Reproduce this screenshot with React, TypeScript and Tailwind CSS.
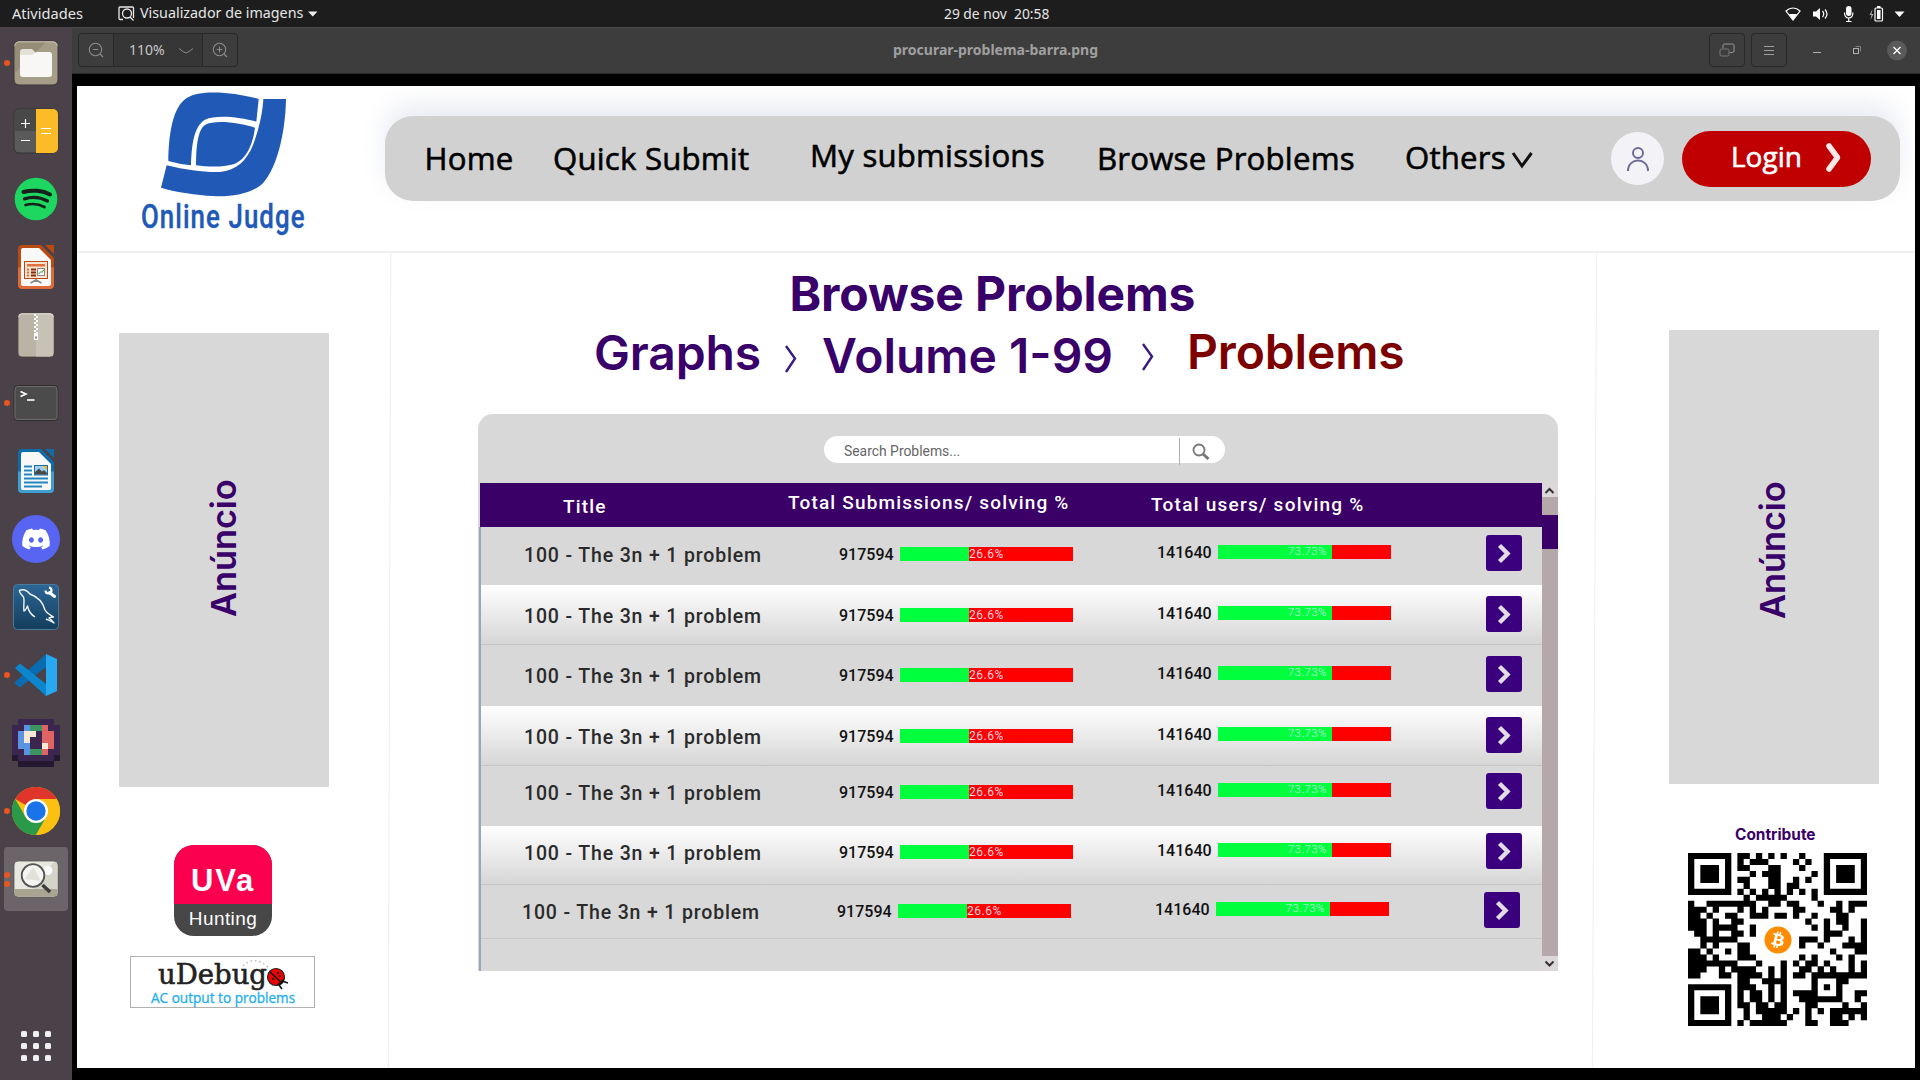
import React from "react";
import { FaDiscord, FaBitcoin } from "react-icons/fa";

const INTER = "font-['Inter',sans-serif]";
const OPEN = "font-['Open_Sans','Noto_Sans',sans-serif]";
const UI = "font-['Noto_Sans','Open_Sans',sans-serif]";
const ROBOTO = "font-['Roboto',sans-serif]";

function Txt({ c, children }: { c: string; children: string }) {
  return <div className={"whitespace-pre leading-none " + c}>{children}</div>;
}

const QR = [
  "#######.##.#.#.#..#...#######",
  "#.....#.#.###....#.#..#.....#",
  "#.###.#.##...##...#...#.###.#",
  "#.###.#...#.###.....#.#.###.#",
  "#.###.#.##...##..#.#..#.###.#",
  "#.....#..#...##.##....#.....#",
  "#######.#.#.#.#.#.#.#.#######",
  ".........#.#####....#........",
  "#..########..##.##...#..#.###",
  "###.#...#.#.#....##....##.#..",
  "##.#..##..###.##.#..#...##...",
  "###.#..##..........#..#.##..#",
  "###.####..#.........#.#..#..#",
  ".##.#..##.#...........###...#",
  "..######..........###.#...#.#",
  "..#.#...##........#..#...####",
  "##.#..#.##.............#...##",
  "###.#...###.......#.#...#.#..",
  "########...#...#.#.##.#...#.#",
  "###..#.####..#.#..##.#.#..#.#",
  "##...##.####.#.#.##.#########",
  "........##..####....#...##...",
  "#######.###..#.#....#.#.#....",
  "#.....#.#.##.#.#.####...#..##",
  "#.###.#.#.##.#.#..#######..#.",
  "#.###.#.##.##.##...##....#..#",
  "#.###.#..#.#####.#.#.#.######",
  "#.....#..#..###.#..#...##.#.#",
  "#######.#.######...##..###...",
];

const ROWS = [
  { box: "h-[58px] pt-[8px] bg-[#d8d8d8]", shift: "" },
  { box: "h-[60px] pt-[10.5px] border-b border-[#c6c6c6] bg-linear-to-b from-white to-[#d6d6d6]", shift: "" },
  { box: "h-[61px] pt-[11px] bg-[#d8d8d8]", shift: "" },
  { box: "h-[60px] pt-[10.5px] border-b border-[#c6c6c6] bg-linear-to-b from-white to-[#d6d6d6]", shift: "" },
  { box: "h-[60px] pt-[6.5px] bg-[#d8d8d8]", shift: "" },
  { box: "h-[59px] pt-[6.5px] border-b border-[#c6c6c6] bg-linear-to-b from-white to-[#d6d6d6]", shift: "" },
  { box: "h-[54px] pt-[6.5px] border-b border-[#c8c8c8] bg-[#d8d8d8]", shift: "-ml-[2px]" },
];

function Row({ box, shift }: { box: string; shift: string }) {
  return (
    <div className={box}>
      <div className={"flex items-start " + shift}>
        <Txt c={ROBOTO + " ml-[43px] mt-[11px] w-[315px] text-[19.5px] font-medium tracking-[0.85px] text-[#2a2a2a]"}>100 - The 3n + 1 problem</Txt>
        <Txt c={ROBOTO + " mt-[12px] w-[61px] text-[16px] font-medium text-[#111]"}>917594</Txt>
        <div className="mt-[12px] flex h-[14px] w-[173px] bg-[#ff0000]">
          <div className="w-[69px] bg-[#00ff3c]" />
          <Txt c={ROBOTO + " pt-px text-[12px] tracking-[0.5px] text-[#ffd0e0]"}>26.6%</Txt>
        </div>
        <Txt c={ROBOTO + " ml-[84px] mt-[10px] w-[61px] text-[16px] font-medium text-[#111]"}>141640</Txt>
        <div className="mt-[10px] flex h-[14px] w-[173px] bg-[#ff0000]">
          <div className="flex w-[114px] justify-end bg-[#00ff3c] pr-[5px]">
            <Txt c={ROBOTO + " pt-px text-[11.5px] font-light tracking-[0.4px] text-[#c8ffe8]"}>73.73%</Txt>
          </div>
        </div>
        <div className="ml-[95px] flex h-[36px] w-[36px] items-center justify-center rounded-[3px] bg-[#3a007e]">
          <svg width="36" height="36" fill="none" stroke="#e2dce6" strokeWidth="4.4">
            <path d="M13.5 10.5 L21.5 18.5 L13.5 26.5" />
          </svg>
        </div>
      </div>
    </div>
  );
}

function OfficeShape({ a, b, id }: { a: string; b: string; id: string }) {
  return (
    <>
      <defs>
        <linearGradient id={id} x1="0" y1="0" x2="0" y2="1">
          <stop offset="0.5" stopColor={a} />
          <stop offset="0.52" stopColor={b} />
        </linearGradient>
      </defs>
      <path d="M10 2 H29 L42 15 V42 a4 4 0 0 1 -4 4 H10 a4 4 0 0 1 -4 -4 V6 a4 4 0 0 1 4 -4Z" fill={"url(#" + id + ")"} />
      <path d="M11 5 H27 L39 17 V41 a2 2 0 0 1 -2 2 H11 a2 2 0 0 1 -2 -2 V7 a2 2 0 0 1 2 -2Z" fill="#f8f8f8" />
      <path d="M33 2 H42 V11Z" fill={a} />
    </>
  );
}

const PIX: Record<string, string> = { P: "#3b2650", B: "#5a94e0", G: "#3a9560", R: "#e06464", W: "#f8e8d8", D: "#241830" };
const PIXROWS = [".PPPPPP.", "PPBGGRPP", "PBWWPRRP", "PBWPPRRP", "PBBPPWRP", "PPBGGRPP", "DPPPPPPD", ".DDDDDD."];

const ICONS: { dots: number; active?: boolean; art: React.ReactNode }[] = [
  {
    dots: 1,
    art: (
      <>
        <rect x="2" y="2" width="44" height="44" rx="5" fill="#a59d88" stroke="#3b3436" />
        <path d="M3 34 L34 3 H7 a4 4 0 0 0 -4 4Z" fill="#968d77" />
        <path d="M2.8 7 a4.2 4.2 0 0 1 4.2-4.2 H41 a4.2 4.2 0 0 1 4.2 4.2" fill="none" stroke="#cdc7b8" />
        <path d="M8 13 a3 3 0 0 1 3-3 H20 l3 3 V18 H8Z" fill="#e4e0d6" />
        <path d="M8 16 H20 l4-3 H37 a3 3 0 0 1 3 3 V35 a3 3 0 0 1 -3 3 H11 a3 3 0 0 1 -3 -3Z" fill="#f8f7f6" />
      </>
    ),
  },
  {
    dots: 0,
    art: (
      <>
        <rect x="2" y="2" width="44" height="44" rx="5" fill="#5a5a5a" stroke="#333" />
        <path d="M2.5 24 V7 a4.5 4.5 0 0 1 4.5-4.5 H24 V24Z" fill="#484848" />
        <path d="M24 2 H41 a5 5 0 0 1 5 5 V41 a5 5 0 0 1 -5 5 H24Z" fill="#fcbc28" />
        <path d="M9 16.5 h9 M13.5 12 v9 M9 33.5 h9 M29 21.5 h10 M29 26.5 h10" stroke="#fff" strokeWidth="1.2" />
      </>
    ),
  },
  {
    dots: 0,
    art: (
      <>
        <circle cx="24" cy="24" r="21.3" fill="#1ed760" />
        <g fill="none" stroke="#14201a" strokeLinecap="round">
          <path d="M11.5 17 C20 14.5 31 15.5 38 19.5" strokeWidth="4" />
          <path d="M12.5 23.8 C20 21.5 29 22.5 35.5 26" strokeWidth="3.3" />
          <path d="M13.5 30 C20 28.3 27 29 32.5 32" strokeWidth="2.7" />
        </g>
      </>
    ),
  },
  {
    dots: 0,
    art: (
      <>
        <OfficeShape id="imp" a="#b84a12" b="#dd6a38" />
        <rect x="12.5" y="18.5" width="23" height="17" fill="#f9e3d2" stroke="#b84a12" />
        <rect x="15" y="21" width="18" height="2.5" fill="#e07040" />
        <path d="M15 26.5 h2 M15 29.5 h2 M15 32.5 h2" stroke="#e07040" strokeWidth="2" />
        <path d="M19 26.5 h5 M19 29.5 h5 M19 32.5 h5" stroke="#8a2e08" strokeWidth="2" />
        <rect x="25.5" y="25.5" width="7" height="7" fill="#fff" stroke="#888" />
        <path d="M26.5 31 L29 28.5 L30 29.5 L32 26.5" fill="none" stroke="#2a9a2a" />
        <path d="M24 36 v3 M24 37 L18.5 40 M24 37 L29.5 40" stroke="#888" strokeWidth="1.5" />
      </>
    ),
  },
  {
    dots: 0,
    art: (
      <>
        <rect x="6" y="2" width="36" height="44" rx="4" fill="#b9b4a5" stroke="#4a4440" strokeWidth="0.8" />
        <path d="M24 2.5 H38 a3.5 3.5 0 0 1 3.5 3.5 V42 a3.5 3.5 0 0 1 -3.5 3.5 H24Z" fill="#c6c2b6" />
        <path d="M6.8 6 a3.2 3.2 0 0 1 3.2-3.2 H38 a3.2 3.2 0 0 1 3.2 3.2" fill="none" stroke="#e4e1d8" />
        <path d="M23 3 V22" stroke="#fff" strokeWidth="2" strokeDasharray="2 2" />
        <path d="M25 5 V22" stroke="#fff" strokeWidth="2" strokeDasharray="2 2" />
        <path d="M22 22 h4 v7 h-4Z" fill="#fff" />
        <rect x="23" y="25.5" width="2" height="2" fill="#888" />
      </>
    ),
  },
  {
    dots: 1,
    art: (
      <>
        <rect x="2" y="6.5" width="44" height="35" rx="4" fill="#4b4b4b" stroke="#2c2c2c" />
        <rect x="3" y="7.5" width="42" height="33" rx="3" fill="none" stroke="#6c6c6c" />
        <path d="M8.5 12.5 L14 15 L8.5 17.5" fill="none" stroke="#fff" strokeWidth="1.6" />
        <path d="M15 21 h7.5" stroke="#fff" strokeWidth="1.6" />
      </>
    ),
  },
  {
    dots: 0,
    art: (
      <>
        <OfficeShape id="wri" a="#0f6ca8" b="#3f9fd2" />
        <path d="M12 19.5 h8 M12 23.5 h8 M12 27.5 h8 M12 31.5 h24 M12 35.5 h24 M12 39.5 h18" stroke="#2288c0" strokeWidth="1.8" />
        <rect x="22.5" y="18.5" width="13" height="9.5" fill="#9fd0f0" stroke="#1b6ea5" />
        <path d="M23 27.5 V25 L27 21.5 L30 24.5 L32 23 L35 26 V27.5Z" fill="#4a4a4a" />
        <path d="M31 19 h4 v4Z" fill="#fcb414" />
      </>
    ),
  },
  {
    dots: 0,
    art: (
      <>
        <circle cx="24" cy="24" r="24" fill="#5865f2" />
        <FaDiscord x={9} y={9} size={30} color="#fff" />
      </>
    ),
  },
  {
    dots: 0,
    art: (
      <>
        <defs>
          <linearGradient id="sea" x1="0" y1="0" x2="0" y2="1">
            <stop offset="0" stopColor="#2c6696" />
            <stop offset="1" stopColor="#143d5c" />
          </linearGradient>
        </defs>
        <rect x="1.5" y="1.5" width="45" height="45" rx="4" fill="url(#sea)" stroke="#4a7a9c" />
        <path d="M23 34 C18 31 16.500 28 15.500 23 C14 26 13.500 28 12 28 C11 23 13 18 11.500 14 C9 11 7 9.500 7.500 7.500 C11 6 15 7.500 18 11 C26 14 31 19 33 27 C35 31 38 31.500 41.500 34 C39 34 38 34.500 37 35 C39 36.500 40 37.500 42 40 C39 38 36 37 34 36" fill="none" stroke="#eef4f8" strokeWidth="1.400" strokeLinejoin="round" />
        <path d="M37.500 9.500 L42.500 13.500" stroke="#fff" strokeWidth="3" strokeLinecap="round" />
        <path d="M33.500 7.500 a3 3 0 1 0 3.500 -3" fill="none" stroke="#fff" strokeWidth="2.200" />
      </>
    ),
  },
  {
    dots: 1,
    art: (
      <>
        <path d="M3 31 L34 3 L34 16 L8 36.5 L3 32.5Z" fill="#0a6cb0" />
        <path d="M3 17 L8 12.5 L34 33 V45Z" fill="#0d86d0" />
        <path d="M34 3 L45 8 V40 L34 45Z" fill="#28a8f0" />
      </>
    ),
  },
  {
    dots: 0,
    art: (
      <g shapeRendering="crispEdges">
        {PIXROWS.flatMap((r, y) =>
          r.split("").map((c, x) => (c === "." ? null : <rect key={x + "-" + y} x={x * 6} y={y * 6} width="6" height="6" fill={PIX[c]} />))
        )}
      </g>
    ),
  },
  {
    dots: 1,
    art: (
      <>
        <circle cx="24" cy="24" r="24" fill="#fcc010" />
        <path d="M24 24 L3.2 12 A24 24 0 0 1 44.8 12Z" fill="#e0352b" />
        <path d="M3.2 12 A24 24 0 0 0 24 48 L34.4 30 L24 24 L13.6 30Z" fill="#2a9a48" />
        <path d="M24 12 H44.8 A24 24 0 0 1 24 48 L34.4 30Z" fill="#fcc010" />
        <circle cx="24" cy="24" r="12" fill="#fff" />
        <circle cx="24" cy="24" r="9.7" fill="#1a73e8" />
      </>
    ),
  },
  {
    dots: 2,
    active: true,
    art: (
      <>
        <rect x="2" y="6" width="44" height="36" rx="4" fill="#e9e8e0" stroke="#555" strokeWidth="0.8" />
        <path d="M20 35 L42 7 a4 4 0 0 1 3.5 4 V35Z" fill="#d5d4c8" />
        <path d="M2.5 34 H45.5 V38 a3.5 3.5 0 0 1 -3.5 3.5 H6 a3.5 3.5 0 0 1 -3.5 -3.5Z" fill="#aaa592" />
        <circle cx="36" cy="15.5" r="4.5" fill="#fafafa" />
        <circle cx="21" cy="20.5" r="11.3" fill="#f4f4f0" stroke="#555" strokeWidth="1.8" />
        <path d="M13 24 L21 12 L29 26Z" fill="#e2e2da" />
        <path d="M30.5 30 L38 37" stroke="#3c3c38" strokeWidth="3.6" />
      </>
    ),
  },
];

function Dock() {
  return (
    <aside className="flex w-[72px] flex-col bg-[#4a4248] pt-[2px]">
      {ICONS.map((it, i) => (
        <div key={i} className="flex h-[68px] items-center">
          <div className={"ml-1 flex h-[64px] w-[64px] items-center rounded " + (it.active ? "bg-[#6b6469]" : "")}>
            <div className="flex w-[8px] flex-col items-start gap-[3px]">
              {Array.from({ length: it.dots }).map((_, d) => (
                <div key={d} className="size-[6px] rounded-full bg-[#e95420]" />
              ))}
            </div>
            <svg width="48" height="48" viewBox="0 0 48 48">{it.art}</svg>
          </div>
        </div>
      ))}
      <div className="mx-auto mt-[118px] grid grid-cols-3 gap-[6px]">
        {Array.from({ length: 9 }).map((_, i) => (
          <div key={i} className="size-[6px] rounded-[1.5px] bg-[#f0eff0]" />
        ))}
      </div>
    </aside>
  );
}

function TopBar() {
  return (
    <div className={"flex h-[27px] items-center bg-[#1d1d1d] text-[#e6e6e6] " + UI}>
      <Txt c="ml-[12px] w-[106px] text-[14.6px]">Atividades</Txt>
      <svg width="17" height="15" viewBox="0 0 17 15" fill="none" stroke="#e8e8e8" strokeWidth="1.3">
        <path d="M5 13.5 H2 a1 1 0 0 1 -1-1 V2 a1 1 0 0 1 1-1 H14.5 a1 1 0 0 1 1 1 V12" />
        <circle cx="9" cy="7.5" r="4.5" />
        <path d="M12 11 L15.5 14.5" />
      </svg>
      <Txt c="ml-[5px] w-[168px] text-[14.3px]">Visualizador de imagens</Txt>
      <svg width="10" height="6"><path d="M0 0.5 H9.5 L4.75 5.5Z" fill="#eee" /></svg>
      <Txt c="ml-[626px] w-[840px] text-[13.8px]">29 de nov  20:58</Txt>
      <svg width="130" height="22" viewBox="0 0 130 22" fill="#fff">
        <path d="M2 8 C6 4 12 4 16 8 L9 17Z" fill="none" stroke="#fff" strokeWidth="1.2" />
        <path d="M5 11 H13 L9 17Z" />
        <path d="M29 8.5 h3 l4-3.5 v12 l-4-3.5 h-3Z" />
        <path d="M38.5 8 q2.5 3 0 6 M41 6.5 q4 4.5 0 9" fill="none" stroke="#fff" strokeWidth="1.2" />
        <rect x="62" y="3" width="5.5" height="10" rx="2.7" />
        <path d="M60.5 9.5 q0 5.5 4.2 5.5 t4.2 -5.5 M64.7 15 v3 M62 18.5 h5.5" fill="none" stroke="#fff" strokeWidth="1.2" />
        <path d="M88.5 6 l-3 6 h2 l-1 5 l3-6 h-2Z" fill="#aaa" />
        <rect x="91" y="5" width="7.5" height="13" rx="1" fill="none" stroke="#fff" strokeWidth="1.2" />
        <rect x="93" y="7" width="3.5" height="9" />
        <rect x="93" y="3" width="3.5" height="2" />
        <path d="M110.5 8.5 h10 l-5 5.5Z" />
      </svg>
    </div>
  );
}

function Toolbar() {
  return (
    <div className={"flex h-[47px] shrink-0 items-start border-b border-t border-b-[#2a2a2a] border-t-[#4c4c4c] bg-[#3d3d3d] pl-[6px] pt-[5px] " + UI}>
      <div className="flex h-[34px] w-[160px] rounded-[4px] border border-[#282828] bg-[#363636]">
        <div className="flex w-[35px] items-center justify-center rounded-l-[4px] border-r border-[#282828] bg-[#3d3d3d]">
          <svg width="16" height="16" viewBox="0 0 16 16" fill="none" stroke="#8c8c8c" strokeWidth="1.1"><circle cx="7.5" cy="7.5" r="6.2" /><path d="M4.8 7.5 h5.4 M12 12 L15 15" /></svg>
        </div>
        <Txt c="ml-[15px] mt-[9px] w-[49px] text-[14px] text-[#c8c8c8]">110%</Txt>
        <svg className="mt-[13px]" width="16" height="8" fill="none" stroke="#8c8c8c"><path d="M1 1.5 Q5 5 8 6 Q11 5 15 1.5" /></svg>
        <div className="ml-auto flex w-[35px] items-center justify-center rounded-r-[4px] border-l border-[#282828] bg-[#3d3d3d]">
          <svg width="16" height="16" viewBox="0 0 16 16" fill="none" stroke="#8c8c8c" strokeWidth="1.1"><circle cx="7.5" cy="7.5" r="6.2" /><path d="M4.8 7.5 h5.4 M7.5 4.8 v5.4 M12 12 L15 15" /></svg>
        </div>
      </div>
      <Txt c="ml-[655px] mt-[10px] w-[816px] text-[14px] font-bold text-[#a0a0a0]">procurar-problema-barra.png</Txt>
      <div className="flex h-[34px] w-[36px] items-center justify-center rounded-[4px] border border-[#282828]">
        <svg width="16" height="14" viewBox="0 0 16 14" fill="none" stroke="#9a9a9a"><path d="M4 5 V2.5 a1.5 1.5 0 0 1 1.5-1.5 H13.5 a1.5 1.5 0 0 1 1.5 1.5 V8 a1.5 1.5 0 0 1 -1.5 1.5 H11" /><rect x="1" y="6" width="9" height="7" rx="1.5" stroke="#7c7c7c" /></svg>
      </div>
      <div className="ml-[6px] flex h-[34px] w-[36px] items-center justify-center rounded-[4px] border border-[#282828]">
        <svg width="10" height="9" stroke="#a0a0a0"><path d="M0 0.5 h10 M0 4.5 h10 M0 8.5 h10" /></svg>
      </div>
      <svg className="ml-[24px] mt-[7px]" width="100" height="22" viewBox="0 0 100 22" fill="none" stroke="#b0b0b0">
        <path d="M2 12.5 h8" />
        <rect x="42.5" y="8.5" width="5" height="5" />
        <path d="M44.5 6.5 h5 v5" stroke="#808080" />
        <circle cx="86" cy="10.5" r="10" fill="#5a5a5a" stroke="none" />
        <path d="M82.5 7 l7 7 M89.5 7 l-7 7" stroke="#fff" strokeWidth="1.3" />
      </svg>
    </div>
  );
}

function SiteHeader() {
  return (
    <header className="flex h-[167px] shrink-0 border-b-2 border-[#f0f0f0]">
      <div className="w-[308px] pl-[64px] pt-[5px]">
        <svg className="ml-[18px]" width="130" height="107" viewBox="477 270 390 321" fill="#2059b6">
          <path d="M505 480 C506 400 518 318 560 291 C600 265 700 272 776 294 L769 362 C720 348 650 340 615 356 C582 375 575 430 573 493 Q535 489 505 480Z" />
          <path d="M588 493 C588 430 595 385 615 372 C645 355 720 365 765 380 C758 430 740 475 700 490 C665 500 620 497 588 493Z" />
          <path d="M790 294 H858 C856 400 830 500 790 545 C755 580 690 588 640 585 C590 582 530 574 483 560 L500 493 C560 508 620 515 660 513 C710 508 740 480 760 430 C780 375 788 330 790 294Z" />
        </svg>
        <Txt c="mt-px w-[162px] origin-left scale-x-[0.76] font-['Roboto',sans-serif] text-[34px] font-medium tracking-[1.4px] text-[#2059b6] [-webkit-text-stroke:0.4px_#2059b6]">Online Judge</Txt>
      </div>
      <nav className={"mt-[30px] flex h-[85px] w-[1515px] items-start rounded-[28px] bg-[#d1d1d1] text-[31.2px] font-medium tracking-[0.2px] text-black shadow-[0_-12px_24px_rgba(100,120,160,0.14)] [-webkit-text-stroke:0.6px] " + OPEN}>
        <Txt c="ml-[39.5px] mt-[27px] w-[128.5px]">Home</Txt>
        <Txt c="mt-[27px] w-[257px]">Quick Submit</Txt>
        <Txt c="mt-[24px] w-[287px]">My submissions</Txt>
        <Txt c="mt-[27px] w-[308px]">Browse Problems</Txt>
        <Txt c="mt-[26px] w-[106px]">Others</Txt>
        <svg className="mt-[35px]" width="24" height="19" fill="none" stroke="#111" strokeWidth="3"><path d="M2 2 L11 15 L20.5 2" /></svg>
        <div className="ml-[76px] mt-[16px] flex size-[53px] items-center justify-center rounded-full bg-[#f3f3f7]">
          <svg width="24" height="26" fill="none" stroke="#6d6a94" strokeWidth="2"><circle cx="12" cy="7" r="5" /><path d="M2 25 C2 11 22 11 22 25" /></svg>
        </div>
        <div className="ml-[18px] mt-[15px] flex h-[56px] w-[189px] items-start rounded-full bg-[#c00000] text-white">
          <Txt c="ml-[49px] mt-[11px] w-[93px] text-[28px] tracking-normal">Login</Txt>
          <svg className="mt-[11px]" width="20" height="31" fill="none" stroke="#fde8e8" strokeWidth="5.5" strokeLinecap="round" strokeLinejoin="round"><path d="M5 4 L13.5 15.5 L5 27" /></svg>
        </div>
      </nav>
    </header>
  );
}

function Qr() {
  return (
    <div className="flex h-[173px] w-[179px] items-center justify-center">
      <svg width="179" height="173" viewBox="0 0 29 29" preserveAspectRatio="none">
        <path fill="#000" d={QR.flatMap((r, y) => r.split("").map((c, x) => (c === "#" ? `M${x} ${y}h1.02v1.02h-1.02z` : ""))).join("")} />
      </svg>
      <div className="absolute size-[28px] rounded-full bg-white text-[28px] text-[#ff8c00]"><FaBitcoin /></div>
    </div>
  );
}

function LeftColumn() {
  return (
    <div className="flex w-[312px] shrink-0 flex-col">
      <div className="ml-[42px] mt-[80px] flex h-[454px] w-[210px] items-center justify-center bg-[#d8d8d8]">
        <div className="mb-[24px] -rotate-90">
          <Txt c={INTER + " text-[34.3px] font-semibold text-[#3a006a]"}>Anúncio</Txt>
        </div>
      </div>
      <div className="ml-[97px] mt-[58px] flex h-[91px] w-[98px] flex-col overflow-hidden rounded-[20px] bg-[#474747] text-center font-['Liberation_Sans',sans-serif] text-white">
        <div className="flex h-[59px] flex-col items-center bg-[#fc0050]">
          <Txt c="mt-[20px] text-[31px] font-bold tracking-[1.8px]">UVa</Txt>
        </div>
        <div className="flex justify-center">
          <Txt c="mt-[5px] text-[19px] tracking-[0.4px]">Hunting</Txt>
        </div>
      </div>
      <div className="ml-[53px] mt-[20px] h-[52px] w-[185px] border border-[#b0b0b0]">
        <div className="flex h-[31px]">
          <Txt c="ml-[27px] mt-[4px] w-[108px] font-['DejaVu_Serif',serif] text-[27.5px] text-[#222] [-webkit-text-stroke:0.6px]">uDebug</Txt>
          <svg className="-ml-[26px] shrink-0" width="54" height="36" viewBox="0 0 54 36">
            <path d="M3 9 Q14 -3 29 11" fill="none" stroke="#bbb" strokeWidth="1.5" strokeDasharray="1.5 3" />
            <circle cx="36" cy="20" r="8.500" fill="#f00000" stroke="#222" strokeWidth="1.2" />
            <path d="M30 15 L42 26 M42 24 L48 26 M39 28 L42 32" stroke="#111" strokeWidth="1.600" />
            <path d="M36 28.500 Q44 29 44.500 21 Z" fill="#111" />
            <g fill="#222"><circle cx="33" cy="22" r="1.2" /><circle cx="38" cy="16" r="1.2" /><circle cx="40" cy="19" r="1" /></g>
          </svg>
        </div>
        <Txt c={OPEN + " ml-[20px] mt-[3px] text-[13.6px] text-[#1eaef0] [-webkit-text-stroke:0.3px]"}>AC output to problems</Txt>
      </div>
    </div>
  );
}

function RightColumn() {
  return (
    <div className="flex grow flex-col">
      <div className="ml-[74px] mt-[77px] flex h-[454px] w-[210px] items-center justify-center bg-[#d8d8d8]">
        <div className="mb-[14px] mr-[3px] -rotate-90">
          <Txt c={INTER + " text-[34.3px] font-semibold text-[#3a006a]"}>Anúncio</Txt>
        </div>
      </div>
      <Txt c={INTER + " ml-[140px] mt-[43px] text-[15.4px] font-bold text-[#3a006a]"}>Contribute</Txt>
      <div className="ml-[93px] mt-[11px] w-[179px]"><Qr /></div>
    </div>
  );
}

function Crumb() {
  return (
    <svg className="shrink-0" width="14" height="28" fill="none" stroke="#3a1a80" strokeWidth="2.4"><path d="M2 1 L11 13.5 L2 27" /></svg>
  );
}

function Center() {
  return (
    <div className="flex w-[1205px] shrink-0 flex-col">
      <Txt c={INTER + " ml-[400.5px] mt-[17px] text-[48px] font-bold tracking-[-0.15px] text-[#3a006a]"}>Browse Problems</Txt>
      <div className={"flex h-[96px] items-start text-[48px] font-semibold tracking-[-0.15px] text-[#3a006a] " + INTER}>
        <Txt c="ml-[205px] mt-[11px] w-[190px]">Graphs</Txt>
        <div className="mt-[27px] w-[38px]"><Crumb /></div>
        <Txt c="mt-[14px] w-[319px] tracking-normal">Volume 1-99</Txt>
        <div className="mt-[25px] w-[46px]"><Crumb /></div>
        <Txt c="mt-[10px] text-[#7d0000]">Problems</Txt>
      </div>
      <div className="ml-[89px] h-[557px] w-[1080px] overflow-hidden rounded-t-[15px] bg-[#d8d8d8]">
        <div className="flex h-[69px] items-start">
          <div className="ml-[346px] mt-[22px] flex h-[27px] w-[401px] items-start rounded-full bg-white">
            <Txt c={ROBOTO + " ml-[20px] mt-[9px] w-[335px] text-[13.9px] text-[#666]"}>Search Problems...</Txt>
            <div className="mt-[2px] h-[27px] w-px bg-[#b0b0b0]" />
            <svg className="ml-[12px] mt-[7px]" width="20" height="18" fill="none" stroke="#777"><circle cx="7" cy="7" r="5.5" strokeWidth="1.8" /><path d="M11 11 L16.5 16" strokeWidth="3" /></svg>
          </div>
        </div>
        <div className="flex h-[488px]">
          <div className="w-[1064px]">
            <div className={"ml-[2px] flex h-[44px] items-start bg-[#3a0068] text-[19px] font-medium tracking-[1.17px] text-white " + ROBOTO}>
              <Txt c="ml-[83px] mt-[14px] w-[225px]">Title</Txt>
              <Txt c="mt-[10px] w-[363px]">Total Submissions/ solving %</Txt>
              <Txt c="mt-[12px] tracking-[1.25px]">Total users/ solving %</Txt>
            </div>
            <div className="ml-[1px] border-l-2 border-[#9aa5c0]">
              {ROWS.map((r, i) => <Row key={i} box={r.box} shift={r.shift} />)}
              <div className="h-[33px]" />
            </div>
          </div>
          <div className="flex w-[16px] flex-col bg-[#b5a8ab]">
            <svg className="bg-[#dcd8da]" width="16" height="14" fill="none" stroke="#333" strokeWidth="2"><path d="M3.5 10 L7.5 6 L11.5 10" /></svg>
            <div className="mt-[18px] h-[34px] bg-[#3a0068]" />
            <svg className="mt-auto bg-[#dcd8da]" width="16" height="15" fill="none" stroke="#333" strokeWidth="2"><path d="M3.5 5.5 L7.5 9.5 L11.5 5.5" /></svg>
          </div>
        </div>
      </div>
    </div>
  );
}

export default function App() {
  return (
    <div className="flex h-[1080px] w-[1920px] flex-col overflow-hidden bg-black">
      <TopBar />
      <div className="flex min-h-0 grow">
        <Dock />
        <div className="flex grow flex-col">
          <Toolbar />
          <main className="ml-[5px] mt-[12px] flex h-[982px] w-[1838px] flex-col overflow-hidden bg-white">
            <SiteHeader />
            <div className="flex grow">
              <LeftColumn />
              <div className="-mr-px w-px rotate-[0.17deg] bg-[#eeeeee]" />
              <Center />
              <div className="w-px rotate-[0.3deg] bg-[#eeeeee]" />
              <RightColumn />
            </div>
          </main>
        </div>
      </div>
    </div>
  );
}
